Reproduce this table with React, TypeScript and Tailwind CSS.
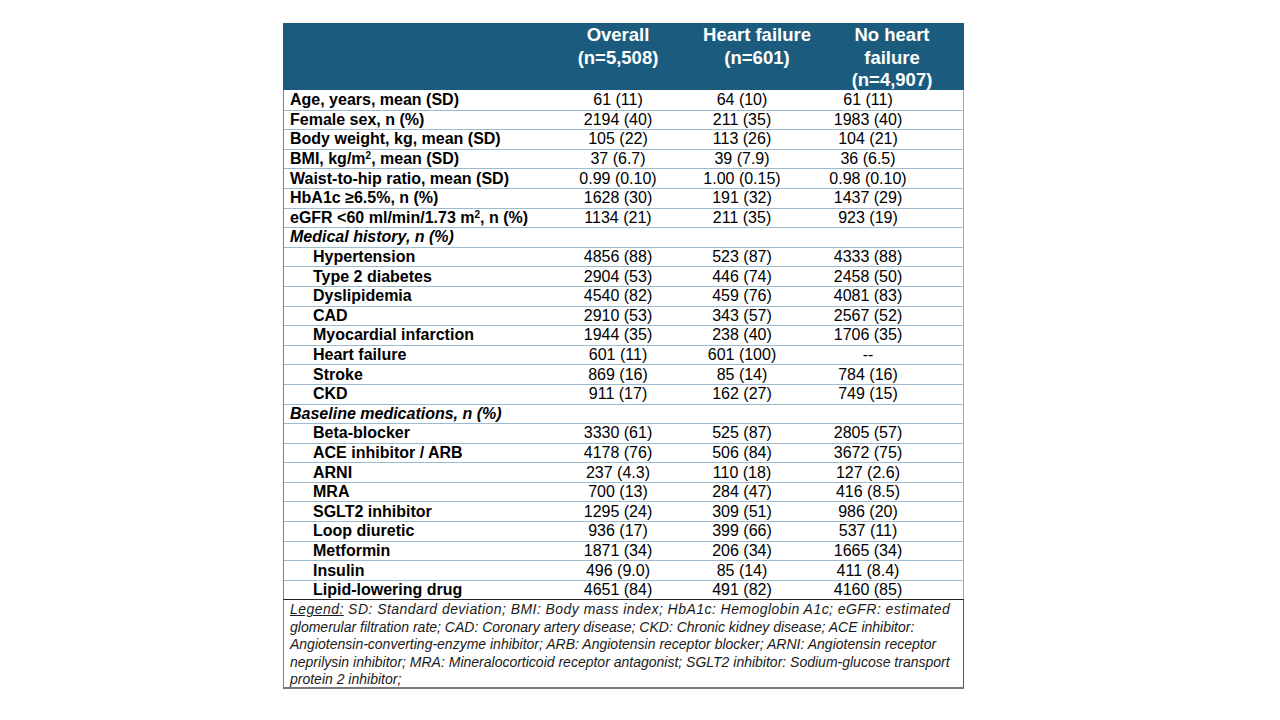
type Row = {
  label: React.ReactNode;
  values?: [string, string, string];
  indent?: boolean;
  section?: boolean;
};

const rows: Row[] = [
  { label: "Age, years, mean (SD)", values: ["61 (11)", "64 (10)", "61 (11)"] },
  { label: "Female sex, n (%)", values: ["2194 (40)", "211 (35)", "1983 (40)"] },
  { label: "Body weight, kg, mean (SD)", values: ["105 (22)", "113 (26)", "104 (21)"] },
  {
    label: (
      <>
        BMI, kg/m<sup className="text-[10px] leading-none">2</sup>, mean (SD)
      </>
    ),
    values: ["37 (6.7)", "39 (7.9)", "36 (6.5)"],
  },
  { label: "Waist-to-hip ratio, mean (SD)", values: ["0.99 (0.10)", "1.00 (0.15)", "0.98 (0.10)"] },
  { label: "HbA1c ≥6.5%, n (%)", values: ["1628 (30)", "191 (32)", "1437 (29)"] },
  {
    label: (
      <>
        eGFR &lt;60 ml/min/1.73 m<sup className="text-[10px] leading-none">2</sup>, n (%)
      </>
    ),
    values: ["1134 (21)", "211 (35)", "923 (19)"],
  },
  { label: "Medical history, n (%)", section: true },
  { label: "Hypertension", indent: true, values: ["4856 (88)", "523 (87)", "4333 (88)"] },
  { label: "Type 2 diabetes", indent: true, values: ["2904 (53)", "446 (74)", "2458 (50)"] },
  { label: "Dyslipidemia", indent: true, values: ["4540 (82)", "459 (76)", "4081 (83)"] },
  { label: "CAD", indent: true, values: ["2910 (53)", "343 (57)", "2567 (52)"] },
  { label: "Myocardial infarction", indent: true, values: ["1944 (35)", "238 (40)", "1706 (35)"] },
  { label: "Heart failure", indent: true, values: ["601 (11)", "601 (100)", "--"] },
  { label: "Stroke", indent: true, values: ["869 (16)", "85 (14)", "784 (16)"] },
  { label: "CKD", indent: true, values: ["911 (17)", "162 (27)", "749 (15)"] },
  { label: "Baseline medications, n (%)", section: true },
  { label: "Beta-blocker", indent: true, values: ["3330 (61)", "525 (87)", "2805 (57)"] },
  { label: "ACE inhibitor / ARB", indent: true, values: ["4178 (76)", "506 (84)", "3672 (75)"] },
  { label: "ARNI", indent: true, values: ["237 (4.3)", "110 (18)", "127 (2.6)"] },
  { label: "MRA", indent: true, values: ["700 (13)", "284 (47)", "416 (8.5)"] },
  { label: "SGLT2 inhibitor", indent: true, values: ["1295 (24)", "309 (51)", "986 (20)"] },
  { label: "Loop diuretic", indent: true, values: ["936 (17)", "399 (66)", "537 (11)"] },
  { label: "Metformin", indent: true, values: ["1871 (34)", "206 (34)", "1665 (34)"] },
  { label: "Insulin", indent: true, values: ["496 (9.0)", "85 (14)", "411 (8.4)"] },
  { label: "Lipid-lowering drug", indent: true, values: ["4651 (84)", "491 (82)", "4160 (85)"] },
];

const legendLines = [
  "SD: Standard deviation; BMI: Body mass index; HbA1c: Hemoglobin A1c; eGFR: estimated",
  "glomerular filtration rate; CAD: Coronary artery disease; CKD: Chronic kidney disease; ACE inhibitor:",
  "Angiotensin-converting-enzyme inhibitor; ARB: Angiotensin receptor blocker; ARNI: Angiotensin receptor",
  "neprilysin inhibitor; MRA: Mineralocorticoid receptor antagonist; SGLT2 inhibitor: Sodium-glucose transport",
  "protein 2 inhibitor;",
];

export default function App() {
  return (
    <div className="w-[1280px] h-[720px] bg-white font-['Liberation_Sans',Arial,sans-serif] text-black">
      <div className="pt-[23px] pl-[283px]">
        <div className="w-[681px]">
          {/* header */}
          <div className="flex h-[67px] bg-[#1b5c7e] text-white font-bold text-[18.5px] leading-[22.5px]">
            <div className="w-[273px]" />
            <div className="w-[124px] text-center pt-[1px]">
              Overall
              <br />
              (n=5,508)
            </div>
            <div className="w-[154px] text-center pt-[1px]">
              Heart failure
              <br />
              (n=601)
            </div>
            <div className="w-[116px] text-center pt-[1px]">No heart failure (n=4,907)</div>
          </div>

          {/* body */}
          <div className="border-l border-l-[#7f7f7f] border-r border-r-[#8fb0c6]">
            {rows.map((r, i) => (
              <div
                key={i}
                className={
                  "flex h-[19.6px] items-center " +
                  (i > 0 ? "border-t border-t-[#9dbbcf]" : "")
                }
              >
                <div
                  className={
                    "w-[272px] text-[16px] font-bold whitespace-nowrap leading-none " +
                    (r.indent ? "pl-[29px]" : "pl-[6px]") +
                    (r.section ? " italic" : "")
                  }
                >
                  {r.label}
                </div>
                {r.values && (
                  <>
                    <div className="w-[124px] text-center text-[16px] leading-none">{r.values[0]}</div>
                    <div className="w-[124px] text-center text-[16px] leading-none">{r.values[1]}</div>
                    <div className="w-[128px] text-center text-[16px] leading-none">{r.values[2]}</div>
                  </>
                )}
              </div>
            ))}
          </div>

          {/* legend */}
          <div className="border-t border-t-[#222] border-l border-l-[#7f7f7f] border-r border-r-[#555] border-b-2 border-b-[#777] h-[90px] pl-[6px] pt-[1px] italic text-[14px] leading-[17.5px] text-[#1a1a1a]">
            {legendLines.map((l, i) => (
              <div key={i} className={"whitespace-nowrap " + (i === 0 ? "tracking-[0.45px]" : "")}>
                {i === 0 && <span className="underline">Legend:</span>} {l}
              </div>
            ))}
          </div>
        </div>
      </div>
    </div>
  );
}
